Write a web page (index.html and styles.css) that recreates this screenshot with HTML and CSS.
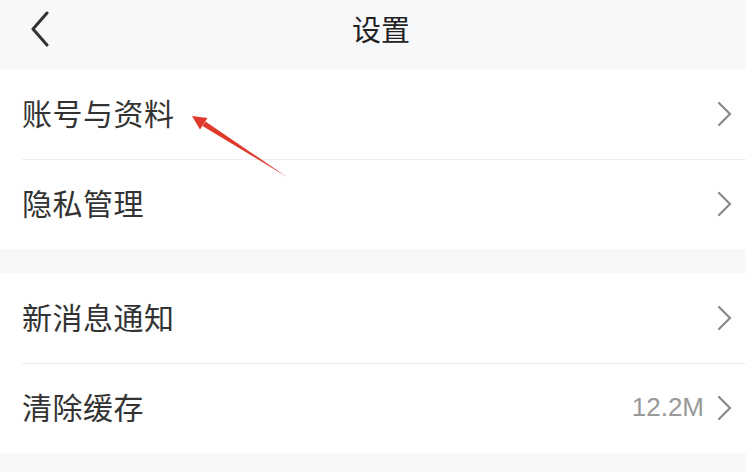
FILE: index.html
```html
<!DOCTYPE html>
<html lang="zh-CN">
<head>
    <meta charset="UTF-8">
    <meta name="viewport" content="width=device-width, initial-scale=1.0">
    <title>设置</title>
    <link rel="stylesheet" href="styles.css">
</head>
<body>

<header class="top-bar">
    <a class="back" href="#">
        <svg width="20" height="36" viewBox="0 0 20 36"><path d="M17 2 L3 18 L17 34" fill="none" stroke="#333" stroke-width="3" stroke-linecap="round" stroke-linejoin="round"/></svg>
    </a>
    <h1>设置</h1>
</header>

<div class="group">
    <a class="row" href="#">
        <span class="label">账号与资料</span>
        <svg class="chevron" width="16" height="26" viewBox="0 0 16 26"><path d="M3 2 L14 13 L3 24" fill="none" stroke="#8a8a8a" stroke-width="2.2" stroke-linecap="round"/></svg>
    </a>
    <a class="row" href="#">
        <span class="label">隐私管理</span>
        <svg class="chevron" width="16" height="26" viewBox="0 0 16 26"><path d="M3 2 L14 13 L3 24" fill="none" stroke="#8a8a8a" stroke-width="2.2" stroke-linecap="round"/></svg>
    </a>
</div>

<div class="group">
    <a class="row" href="#">
        <span class="label">新消息通知</span>
        <svg class="chevron" width="16" height="26" viewBox="0 0 16 26"><path d="M3 2 L14 13 L3 24" fill="none" stroke="#8a8a8a" stroke-width="2.2" stroke-linecap="round"/></svg>
    </a>
    <a class="row" href="#">
        <span class="label">清除缓存</span>
        <span class="value">12.2M</span>
        <svg class="chevron" width="16" height="26" viewBox="0 0 16 26"><path d="M3 2 L14 13 L3 24" fill="none" stroke="#8a8a8a" stroke-width="2.2" stroke-linecap="round"/></svg>
    </a>
</div>

<!-- annotation arrow pointing at the first row -->
<svg class="pointer" width="746" height="472" viewBox="0 0 746 472">
    <polygon points="192,116 207.5,118 200,129.5" fill="#e0392b"/>
    <polygon points="205.5,121.5 202.5,126 287,177" fill="#e0392b"/>
</svg>

</body>
</html>
```

FILE: styles.css
```css
body {
    margin: 0;
    padding: 0;
    background-color: #f7f8fa;
    font-family: "Noto Sans CJK SC", "Noto Sans", sans-serif;
    color: #333;
    position: relative;
    height: 472px;
    overflow: hidden;
}
.top-bar {
    height: 69px;
    display: flex;
    align-items: center;
    justify-content: center;
    position: relative;
}
.top-bar h1 {
    margin: 0;
    font-size: 29px;
    font-weight: 400;
    color: #222;
    line-height: 1;
    padding-bottom: 12px;
    padding-left: 16px;
}
.back {
    position: absolute;
    left: 30px;
    top: 11px;
    display: block;
    line-height: 0;
}
.group {
    background-color: #fff;
    margin-bottom: 24px;
}
.row {
    display: flex;
    align-items: center;
    height: 90px;
    padding: 0 14px 0 22px;
    text-decoration: none;
    color: #333;
    position: relative;
}
.row + .row::before {
    content: "";
    position: absolute;
    left: 22px;
    right: 0;
    top: 0;
    border-top: 1px solid #eee;
}
.label {
    flex: 1;
    font-size: 30px;
    letter-spacing: 0.5px;
    padding-bottom: 4px;
}
.value {
    font-family: "Liberation Sans", Arial, sans-serif;
    font-size: 26px;
    color: #999;
    margin-right: 12px;
    padding-bottom: 2px;
}
.chevron {
    display: block;
}
.pointer {
    position: absolute;
    left: 0;
    top: 0;
    pointer-events: none;
}
```
